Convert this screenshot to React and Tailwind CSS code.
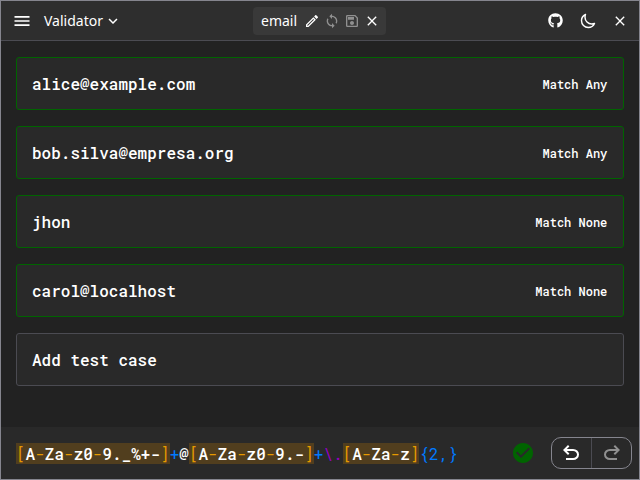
import { MdMenu, MdExpandMore, MdOutlineEdit, MdSync, MdOutlineSave, MdClose, MdCheckCircle } from "react-icons/md";
import { FaGithub } from "react-icons/fa";
import { IoMoonOutline } from "react-icons/io5";

const cases = [
  { text: "alice@example.com", match: "Match Any" },
  { text: "bob.silva@empresa.org", match: "Match Any" },
  { text: "jhon", match: "Match None" },
  { text: "carol@localhost", match: "Match None" },
];

const mono = "font-['Roboto_Mono','DejaVu_Sans_Mono',monospace] font-medium";

function UndoIcon({ className = "" }) {
  return (
    <svg className={`size-6 ${className}`} viewBox="0 -960 960 960" fill="currentColor">
      <path d="M280-200v-80h284q63 0 109.5-40T720-420q0-60-46.5-100T564-560H312l104 104-56 56-200-200 200-200 56 56-104 104h252q97 0 166.5 63T800-420q0 94-69.5 157T564-200H280Z" />
    </svg>
  );
}

function CharClass({ children }) {
  return (
    <span className="bg-[#513e1e] font-normal text-[#e69a00]">
      [{children.split("|").map((part, i) => (
        <span key={i} className={i % 2 ? "text-[#e69a00]" : "font-medium text-white"}>{part}</span>
      ))}]
    </span>
  );
}

export default function App() {
  return (
    <div className="flex h-[480px] w-[640px] flex-col overflow-hidden border border-[#85858e] bg-[#222222] font-['Noto_Sans',sans-serif] text-white">
      <header className="flex h-10 shrink-0 items-center border-b border-[#4b4b52] bg-[#2e2e2e]">
        <div className="flex w-[252px] items-center pl-[11px]">
          <MdMenu className="size-5" />
          <span className="ml-3 text-sm">Validator</span>
          <MdExpandMore className="ml-px size-[18px]" />
        </div>
        <div className="flex h-7 w-[133px] items-center rounded bg-[#393939] pl-2">
          <span className="w-9 text-sm">email</span>
          <MdOutlineEdit className="ml-[7px] size-4" />
          <MdSync className="ml-1 size-4 text-[#909090]" />
          <MdOutlineSave className="ml-1 size-4 text-[#909090]" />
          <MdClose className="ml-1 size-4" />
        </div>
        <div className="flex flex-1 items-center justify-end pr-[11px]">
          <FaGithub className="size-[15px]" />
          <IoMoonOutline className="ml-[17px] size-4 [&_path]:[stroke-width:46px]" />
          <MdClose className="ml-4 size-4" />
        </div>
      </header>
      <main className={`flex flex-1 flex-col gap-4 px-[15px] pt-4 ${mono}`}>
        {cases.map((c) => (
          <div key={c.text} className="flex h-[53px] items-center justify-between rounded-[3px] border border-[#006400] bg-[#292929] px-[15px]">
            <span className="text-base">{c.text}</span>
            <span className="whitespace-nowrap pr-[0.7px] text-xs">{c.match}</span>
          </div>
        ))}
        <div className="flex h-[53px] items-center rounded-[3px] border border-[#4b4b52] bg-[#292929] px-[15px] text-base">
          Add test case
        </div>
      </main>
      <footer className="flex h-[52px] shrink-0 items-center bg-[#292929] px-[15px]">
        <div className={`flex-1 whitespace-pre pt-0.5 text-base ${mono}`}>
          <CharClass>A|-|Za|-|z0|-|9._%+-</CharClass>
          <span className="font-normal text-[#007aff]">+</span>@<CharClass>A|-|Za|-|z0|-|9.-</CharClass>
          <span className="font-normal text-[#007aff]">+</span>
          <span className="font-normal text-[#9800c8]">\.</span>
          <CharClass>A|-|Za|-|z</CharClass>
          <span className="font-normal text-[#007aff]">{"{2,}"}</span>
        </div>
        <MdCheckCircle className="mr-4 size-6 text-[#006400]" />
        <div className="-mr-2 flex h-8 w-[81px] rounded-[10px] border border-[#85858e]">
          <div className="flex w-10 items-center justify-center border-r border-[#4b4b52] pr-px">
            <UndoIcon />
          </div>
          <div className="flex flex-1 items-center justify-center">
            <UndoIcon className="-scale-x-100 text-[#909090]" />
          </div>
        </div>
      </footer>
    </div>
  );
}
